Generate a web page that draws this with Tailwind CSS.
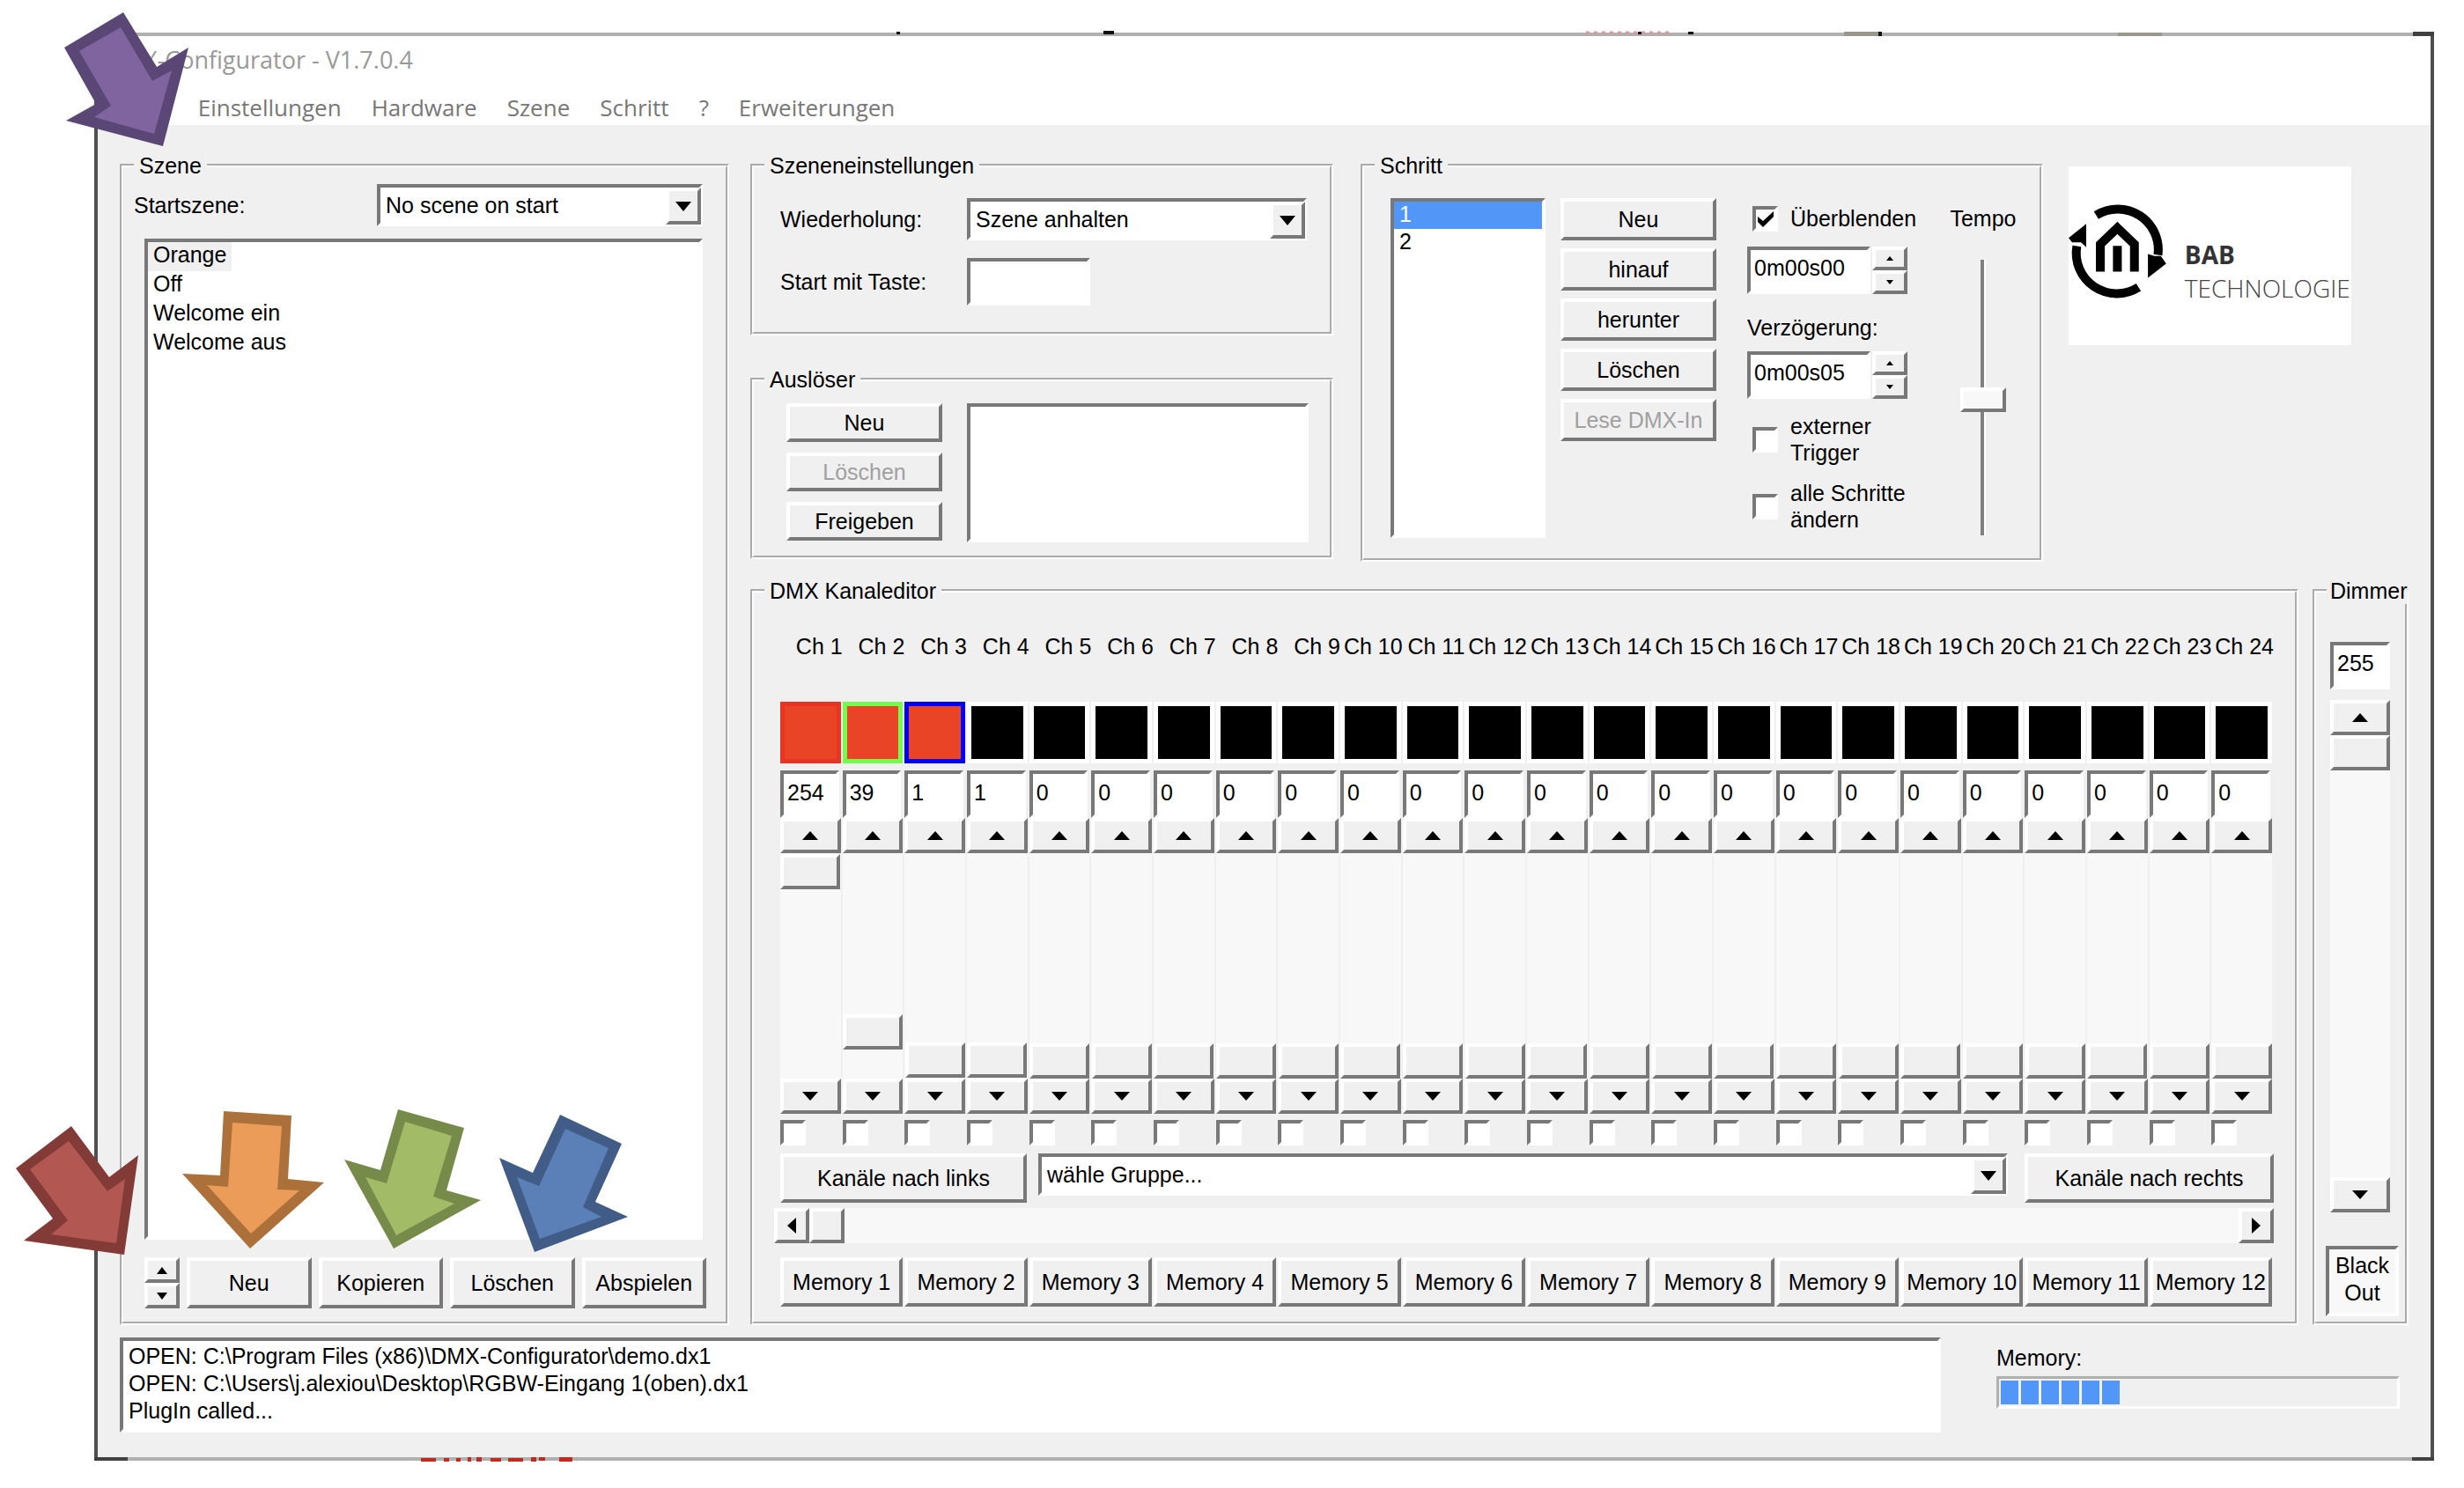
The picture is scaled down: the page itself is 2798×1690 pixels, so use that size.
<!DOCTYPE html>
<html lang="de">
  <head>
    <meta charset="UTF-8" />
    <meta name="viewport" content="width=device-width, initial-scale=1.0" />
    <title>DMX-Configurator - V1.7.0.4</title>
    <script src="https://cdn.jsdelivr.net/npm/@tailwindcss/browser@4"></script>
  </head>
  <body class="bg-white">
    <div
      class="relative flex min-h-screen flex-col bg-white pt-[37px] pr-[34px] pb-[31px] pl-[107px] font-['Liberation_Sans',sans-serif] text-[25px] leading-[30px] text-black"
    >
      <div
        class="flex flex-1 flex-col border-4 bg-[#f0f0f0] [border-color:#b0b0b0_#505050_#b0b0b0_#505050]"
      >
        <!-- Title bar + menu -->
        <header class="h-[101px] bg-white font-['Open_Sans',sans-serif] text-[26px]">
          <h1 class="pt-3 pl-2 text-[27px] text-[#999]">DMX-Configurator - V1.7.0.4</h1>
          <nav class="mt-6 flex gap-[34px] pl-4 text-[#777]">
            <a href="#">Datei</a>
            <a href="#">Einstellungen</a>
            <a href="#">Hardware</a>
            <a href="#">Szene</a>
            <a href="#">Schritt</a>
            <a href="#">?</a>
            <a href="#">Erweiterungen</a>
          </nav>
        </header>

        <div class="flex flex-1 flex-col px-[25px] pt-[31px] pb-7">
          <main class="flex flex-1">
            <!-- Szene -->
            <fieldset class="flex w-[692px] flex-col border-4 border-white [border-style:groove]">
              <legend class="ml-3 px-1.5">Szene</legend>
              <div class="flex flex-1 flex-col pt-1.5 pr-[22px] pb-[15px] pl-6">
                <div class="-ml-3 flex items-center justify-between">
                  <label for="startszene">Startszene:</label>
                  <div class="relative mr-1 w-[370px]">
                    <select
                      id="startszene"
                      class="h-[48px] w-full appearance-none border-4 bg-white pl-1.5 [border-color:#787878_#fff_#fff_#787878]"
                    >
                      <option>No scene on start</option>
                    </select>
                    <span
                      class="pointer-events-none absolute top-1 right-0.5 flex h-[42px] w-10 items-center justify-center border-4 bg-[#f0f0f0] [border-color:#fff_#787878_#787878_#fff]"
                      ><svg class="h-[11px] w-[18px]" viewBox="0 0 18 11"><path d="M0 0h18L9 11z" /></svg
                    ></span>
                  </div>
                </div>
                <select
                  size="4"
                  aria-label="Szenen"
                  class="mt-3.5 mr-1 flex-1 appearance-none overflow-hidden border-4 bg-white [border-color:#787878_#fff_#fff_#787878]"
                >
                  <option class="h-[33px] w-fit bg-[#f0f0f0] px-1.5 py-0 leading-[33px]">Orange</option>
                  <option class="h-[33px] w-fit px-1.5 py-0 leading-[33px]">Off</option>
                  <option class="h-[33px] w-fit px-1.5 py-0 leading-[33px]">Welcome ein</option>
                  <option class="h-[33px] w-fit px-1.5 py-0 leading-[33px]">Welcome aus</option>
                </select>
                <div class="mt-5 flex h-[58px] gap-2">
                  <div class="flex w-10 flex-col">
                    <button
                      aria-label="nach oben"
                      class="flex flex-1 items-center justify-center border-4 [border-color:#fff_#787878_#787878_#fff]"
                    >
                      <svg class="h-2 w-3" viewBox="0 0 12 8"><path d="M0 8h12L6 0z" /></svg>
                    </button>
                    <button
                      aria-label="nach unten"
                      class="flex flex-1 items-center justify-center border-4 [border-color:#fff_#787878_#787878_#fff]"
                    >
                      <svg class="h-2 w-3" viewBox="0 0 12 8"><path d="M0 0h12L6 8z" /></svg>
                    </button>
                  </div>
                  <button class="flex-1 border-4 [border-color:#fff_#787878_#787878_#fff]">Neu</button>
                  <button class="flex-1 border-4 [border-color:#fff_#787878_#787878_#fff]">Kopieren</button>
                  <button class="flex-1 border-4 [border-color:#fff_#787878_#787878_#fff]">Löschen</button>
                  <button class="flex-1 border-4 [border-color:#fff_#787878_#787878_#fff]">Abspielen</button>
                </div>
              </div>
            </fieldset>

            <div class="ml-6 flex flex-1 flex-col">
              <div class="flex items-start">
                <div class="flex w-[662px] flex-col gap-[35px]">
                  <!-- Szeneneinstellungen -->
                  <fieldset class="h-[208px] border-4 border-white [border-style:groove]">
                    <legend class="ml-3 px-1.5">Szeneneinstellungen</legend>
                    <div class="flex flex-col gap-5 pt-[22px] pl-[30px]">
                      <div class="flex items-center">
                        <label for="wiederholung" class="w-[212px]">Wiederholung:</label>
                        <div class="relative w-[386px]">
                          <select
                            id="wiederholung"
                            class="h-[48px] w-full appearance-none border-4 bg-white pl-1.5 [border-color:#787878_#fff_#fff_#787878]"
                          >
                            <option>Szene anhalten</option>
                          </select>
                          <span
                            class="pointer-events-none absolute top-1 right-0.5 flex h-[42px] w-10 items-center justify-center border-4 bg-[#f0f0f0] [border-color:#fff_#787878_#787878_#fff]"
                            ><svg class="h-[11px] w-[18px]" viewBox="0 0 18 11"><path d="M0 0h18L9 11z" /></svg
                          ></span>
                        </div>
                      </div>
                      <div class="flex items-center">
                        <label for="taste" class="w-[212px]">Start mit Taste:</label>
                        <input
                          id="taste"
                          type="text"
                          class="h-[54px] w-[140px] border-4 bg-white pl-1 [border-color:#787878_#fff_#fff_#787878]"
                        />
                      </div>
                    </div>
                  </fieldset>

                  <!-- Auslöser -->
                  <fieldset class="h-[219px] border-4 border-white [border-style:groove]">
                    <legend class="ml-3 px-1.5">Auslöser</legend>
                    <div class="flex gap-7 pt-3 pl-[37px]">
                      <div class="flex w-[177px] flex-col gap-3">
                        <button class="h-11 border-4 [border-color:#fff_#787878_#787878_#fff]">Neu</button>
                        <button
                          disabled
                          class="h-11 border-4 text-[#a0a0a0] [border-color:#fff_#787878_#787878_#fff]"
                        >
                          Löschen
                        </button>
                        <button class="h-11 border-4 [border-color:#fff_#787878_#787878_#fff]">
                          Freigeben
                        </button>
                      </div>
                      <select
                        size="4"
                        aria-label="Auslöser"
                        class="h-[158px] w-[388px] appearance-none border-4 bg-white [border-color:#787878_#fff_#fff_#787878]"
                      ></select>
                    </div>
                  </fieldset>
                </div>

                <!-- Schritt -->
                <fieldset class="ml-[31px] h-[465px] w-[775px] border-4 border-white [border-style:groove]">
                  <legend class="ml-3 px-1.5">Schritt</legend>
                  <div class="flex pt-[22px] pl-[30px]">
                    <select
                      size="4"
                      aria-label="Schritte"
                      class="h-[386px] w-[176px] appearance-none overflow-hidden border-4 bg-white [border-color:#787878_#fff_#fff_#787878]"
                    >
                      <option class="h-[31px] bg-[#5297f8] px-1.5 py-0 leading-[31px] text-white">1</option>
                      <option class="h-[31px] px-1.5 py-0 leading-[31px]">2</option>
                    </select>
                    <div class="ml-[17px] flex w-[177px] flex-col gap-[9px]">
                      <button class="h-12 border-4 [border-color:#fff_#787878_#787878_#fff]">Neu</button>
                      <button class="h-12 border-4 [border-color:#fff_#787878_#787878_#fff]">hinauf</button>
                      <button class="h-12 border-4 [border-color:#fff_#787878_#787878_#fff]">herunter</button>
                      <button class="h-12 border-4 [border-color:#fff_#787878_#787878_#fff]">Löschen</button>
                      <button
                        disabled
                        class="h-12 border-4 text-[#a0a0a0] [border-color:#fff_#787878_#787878_#fff]"
                      >
                        Lese DMX-In
                      </button>
                    </div>
                    <div class="ml-[35px] w-[194px] pt-2">
                      <label class="flex items-center gap-3.5 pl-1.5">
                        <span class="relative flex">
                          <input
                            type="checkbox"
                            checked
                            class="size-[29px] appearance-none border-4 bg-white [border-color:#787878_#fff_#fff_#787878]"
                          />
                          <svg class="absolute top-1.5 left-1.5 size-[18px]" viewBox="0 0 18 18">
                            <path d="M0 6v6l6 6L18 6V0L6 11z" />
                          </svg>
                        </span>
                        Überblenden
                      </label>
                      <div class="mt-[17px] flex h-[54px] gap-0.5">
                        <input
                          type="text"
                          value="0m00s00"
                          aria-label="Überblendzeit"
                          class="w-[140px] border-4 bg-white pb-1.5 pl-1 [border-color:#787878_#fff_#fff_#787878]"
                        />
                        <div class="flex w-10 flex-col">
                          <button
                            aria-label="mehr"
                            class="flex flex-1 items-center justify-center border-4 [border-color:#fff_#787878_#787878_#fff]"
                          >
                            <svg class="h-[5px] w-2" viewBox="0 0 8 5"><path d="M0 5h8L4 0z" /></svg>
                          </button>
                          <button
                            aria-label="weniger"
                            class="flex flex-1 items-center justify-center border-4 [border-color:#fff_#787878_#787878_#fff]"
                          >
                            <svg class="h-[5px] w-2" viewBox="0 0 8 5"><path d="M0 0h8L4 5z" /></svg>
                          </button>
                        </div>
                      </div>
                      <label for="verzoegerung" class="mt-[23px] block">Verzögerung:</label>
                      <div class="mt-3 flex h-[54px] gap-0.5">
                        <input
                          id="verzoegerung"
                          type="text"
                          value="0m00s05"
                          class="w-[140px] border-4 bg-white pb-1.5 pl-1 [border-color:#787878_#fff_#fff_#787878]"
                        />
                        <div class="flex w-10 flex-col">
                          <button
                            aria-label="mehr"
                            class="flex flex-1 items-center justify-center border-4 [border-color:#fff_#787878_#787878_#fff]"
                          >
                            <svg class="h-[5px] w-2" viewBox="0 0 8 5"><path d="M0 5h8L4 0z" /></svg>
                          </button>
                          <button
                            aria-label="weniger"
                            class="flex flex-1 items-center justify-center border-4 [border-color:#fff_#787878_#787878_#fff]"
                          >
                            <svg class="h-[5px] w-2" viewBox="0 0 8 5"><path d="M0 0h8L4 5z" /></svg>
                          </button>
                        </div>
                      </div>
                      <label class="mt-4 flex items-center gap-3.5 pl-1.5">
                        <input
                          type="checkbox"
                          class="size-[29px] appearance-none border-4 bg-white [border-color:#787878_#fff_#fff_#787878]"
                        />
                        <span>externer<br />Trigger</span>
                      </label>
                      <label class="mt-4 flex items-center gap-3.5 pl-1.5">
                        <input
                          type="checkbox"
                          class="size-[29px] appearance-none border-4 bg-white [border-color:#787878_#fff_#fff_#787878]"
                        />
                        <span>alle Schritte<br />ändern</span>
                      </label>
                    </div>
                    <div class="ml-[35px] flex w-[78px] flex-col items-center pt-2">
                      <label for="tempo">Tempo</label>
                      <input
                        id="tempo"
                        type="range"
                        value="49"
                        class="mt-8 h-[313px] w-[52px] appearance-none bg-[linear-gradient(90deg,#808080_4px,#fff_4px)] bg-[length:6px_100%] bg-center bg-no-repeat [direction:rtl] [writing-mode:vertical-lr] [&::-webkit-slider-thumb]:h-[28px] [&::-webkit-slider-thumb]:w-[52px] [&::-webkit-slider-thumb]:appearance-none [&::-webkit-slider-thumb]:border-4 [&::-webkit-slider-thumb]:bg-[#f8f8f8] [&::-webkit-slider-thumb]:[border-color:#fff_#787878_#787878_#fff]"
                      />
                    </div>
                  </div>
                </fieldset>

                <!-- Logo -->
                <svg
                  class="mt-4 ml-[29px] h-[203px] w-[321px] bg-white"
                  viewBox="148 87 962 608"
                  role="img"
                  aria-label="BAB Technologie"
                >
                  <g fill="none" stroke="#000" stroke-width="30">
                    <path d="M242 253A138 138 0 0 1 452 388" />
                    <path d="M176 358A138 138 0 0 0 386 498" />
                    <path d="M256 445V352L314 296L372 352V445M314 357V445" />
                  </g>
                  <path d="M148 330L208 282V362L190 345H160zM480 418L418 466V385L440 392H462z" />
                  <text x="543" y="420" class="fill-[#333] font-['Open_Sans'] text-[84px] font-bold">BAB</text>
                  <text x="543" y="532" class="fill-[#444] font-['Open_Sans'] text-[84px] font-light">
                    TECHNOLOGIE
                  </text>
                </svg>
              </div>

              <div class="mt-[18px] flex flex-1 gap-4">
                <!-- DMX Kanaleditor -->
                <fieldset class="flex min-w-0 flex-1 flex-col border-4 border-white [border-style:groove]">
                  <legend class="ml-3 px-1.5">DMX Kanaleditor</legend>
                  <div class="flex flex-1 flex-col pt-[33px] pr-6 pb-[17px] pl-[23px]">
                    <div id="channels" class="grid flex-1 grid-cols-24 pl-[7px]"></div>
                    <div class="mt-[9px] flex items-start pl-[7px]">
                      <button class="h-14 w-[280px] border-4 [border-color:#fff_#787878_#787878_#fff]">
                        Kanäle nach links
                      </button>
                      <div class="relative ml-[13px] flex-1">
                        <select
                          aria-label="Gruppe"
                          class="h-[48px] w-full appearance-none border-4 bg-white pl-1.5 [border-color:#787878_#fff_#fff_#787878]"
                        >
                          <option>wähle Gruppe...</option>
                        </select>
                        <span
                          class="pointer-events-none absolute top-1 right-0.5 flex h-[42px] w-10 items-center justify-center border-4 bg-[#f0f0f0] [border-color:#fff_#787878_#787878_#fff]"
                          ><svg class="h-[11px] w-[18px]" viewBox="0 0 18 11"><path d="M0 0h18L9 11z" /></svg
                        ></span>
                      </div>
                      <button
                        class="ml-[19px] h-14 w-[283px] border-4 [border-color:#fff_#787878_#787878_#fff]"
                      >
                        Kanäle nach rechts
                      </button>
                    </div>
                    <div class="mt-1.5 flex h-10">
                      <button
                        aria-label="zurück"
                        class="flex w-10 items-center justify-center border-4 [border-color:#fff_#787878_#787878_#fff]"
                      >
                        <svg class="h-[18px] w-2.5" viewBox="0 0 10 18"><path d="M10 0v18L0 9z" /></svg>
                      </button>
                      <input
                        type="range"
                        value="0"
                        aria-label="Kanalbereich"
                        class="h-10 min-w-0 flex-1 appearance-none bg-[#f8f8f8] [&::-webkit-slider-thumb]:size-10 [&::-webkit-slider-thumb]:appearance-none [&::-webkit-slider-thumb]:border-4 [&::-webkit-slider-thumb]:bg-[#f0f0f0] [&::-webkit-slider-thumb]:[border-color:#fff_#787878_#787878_#fff]"
                      />
                      <button
                        aria-label="weiter"
                        class="flex w-10 items-center justify-center border-4 [border-color:#fff_#787878_#787878_#fff]"
                      >
                        <svg class="h-[18px] w-2.5" viewBox="0 0 10 18"><path d="M0 0v18L10 9z" /></svg>
                      </button>
                    </div>
                    <div id="memories" class="mt-4 grid grid-cols-12 pl-[7px]"></div>
                  </div>
                </fieldset>

                <!-- Dimmer -->
                <fieldset class="flex w-[109px] min-w-0 flex-col border-4 border-white [border-style:groove]">
                  <legend class="ml-3 pl-1">Dimmer</legend>
                  <div class="flex flex-1 flex-col pt-[43px] pr-[7px] pb-1.5 pl-[11px]">
                    <div class="flex flex-1 flex-col pr-2.5 pl-[5px]">
                      <input
                        type="text"
                        value="255"
                        aria-label="Dimmer"
                        class="h-[54px] w-full border-4 bg-white pb-1.5 pl-1 [border-color:#787878_#fff_#fff_#787878]"
                      />
                      <button
                        aria-label="heller"
                        class="mt-3 flex h-10 items-center justify-center border-4 [border-color:#fff_#787878_#787878_#fff]"
                      >
                        <svg class="h-2.5 w-[18px]" viewBox="0 0 18 10"><path d="M0 10h18L9 0z" /></svg>
                      </button>
                      <input
                        type="range"
                        max="255"
                        value="255"
                        aria-label="Dimmer Regler"
                        class="min-h-0 w-full flex-1 appearance-none bg-[#f8f8f8] [direction:rtl] [writing-mode:vertical-lr] [&::-webkit-slider-thumb]:h-10 [&::-webkit-slider-thumb]:w-[68px] [&::-webkit-slider-thumb]:appearance-none [&::-webkit-slider-thumb]:border-4 [&::-webkit-slider-thumb]:bg-[#f0f0f0] [&::-webkit-slider-thumb]:[border-color:#fff_#787878_#787878_#fff]"
                      />
                      <button
                        aria-label="dunkler"
                        class="flex h-10 items-center justify-center border-4 [border-color:#fff_#787878_#787878_#fff]"
                      >
                        <svg class="h-2.5 w-[18px]" viewBox="0 0 18 10"><path d="M0 0h18L9 10z" /></svg>
                      </button>
                    </div>
                    <button
                      aria-pressed="true"
                      class="mt-[38px] h-20 border-4 bg-[#f8f8f8] pb-1 leading-[31px] [border-color:#787878_#fff_#fff_#787878]"
                    >
                      Black<br />Out
                    </button>
                  </div>
                </fieldset>
              </div>
            </div>
          </main>

          <!-- Log + memory usage -->
          <footer class="mt-3.5 flex items-start">
            <textarea
              readonly
              aria-label="Protokoll"
              class="block h-[108px] flex-1 resize-none overflow-hidden border-4 bg-white px-1.5 py-0.5 leading-[31px] [border-color:#787878_#fff_#fff_#787878]"
            >
OPEN: C:\Program Files (x86)\DMX-Configurator\demo.dx1
OPEN: C:\Users\j.alexiou\Desktop\RGBW-Eingang 1(oben).dx1
PlugIn called...</textarea
            >
            <div class="mt-2 mr-2.5 ml-[63px] w-[458px]">
              <span id="memory-label">Memory:</span>
              <div
                role="progressbar"
                aria-labelledby="memory-label"
                aria-valuenow="30"
                class="mt-1.5 flex h-[37px] gap-[3px] border-3 p-0.5 [border-color:#b0b0b0_#fff_#fff_#b0b0b0]"
              >
                <span class="w-5 bg-[#5297f8]"></span>
                <span class="w-5 bg-[#5297f8]"></span>
                <span class="w-5 bg-[#5297f8]"></span>
                <span class="w-5 bg-[#5297f8]"></span>
                <span class="w-5 bg-[#5297f8]"></span>
                <span class="w-5 bg-[#5297f8]"></span>
              </div>
            </div>
          </footer>
        </div>
      </div>

      <!-- Arrows and edge marks over the window -->
      <svg class="pointer-events-none absolute top-0 left-0 h-[1690px] w-[2798px]" viewBox="0 0 2798 1690">
        <path fill="#5a4776" d="M140 14L178 76L214 54L185 166L75 137L109 118L73 54z" />
        <path fill="#7f649f" d="M137 31L173 92L195 80L175 152L107 133L126 120L90 58z" />
        <path fill="#833b38" d="M81 1279L124 1337L157 1312L141 1425L27 1409L60 1384L18 1327z" />
        <path fill="#b25751" d="M78 1296L122 1353L142 1339L132 1412L58 1402L77 1386L34 1328z" />
        <path fill="#ac713b" d="M254 1262L331 1267L327 1339L368 1343L284 1418L207 1333L250 1335z" />
        <path fill="#ea9c58" d="M264 1275L320 1279L315 1351L340 1352L285 1401L235 1346L259 1348z" />
        <path fill="#768a49" d="M452 1260L527 1281L507 1352L546 1363L447 1418L391 1317L432 1329z" />
        <path fill="#a2bb67" d="M460 1274L513 1290L492 1359L516 1367L450 1403L415 1337L439 1344z" />
        <path fill="#415c87" d="M636 1266L706 1299L676 1365L713 1382L607 1422L567 1315L605 1332z" />
        <path fill="#5a80b7" d="M642 1282L691 1304L662 1371L683 1382L613 1407L587 1337L612 1347z" />
        <path fill="#404040" d="M107 1655h38v4h-38zM2739 1655h25v4h-25zM2740 36h24v5h-24z" />
        <path fill="#111" d="M1018 36h4v3h-4zM1253 35h12v4h-12zM1860 36h4v3h-4zM1917 36h6v3h-6zM2133 36h4v5h-4z" />
        <path fill="#99968c" d="M2094 36h39v5h-39zM2405 37h50v4h-50z" />
        <path stroke="#d99" stroke-width="3" stroke-dasharray="4 5" d="M1801 37H1900" />
        <path
          fill="#c22a1e"
          d="M478 1656h17v4h-17zM504 1656h6v4h-6zM518 1656h5v4h-5zM531 1655h4v5h-4zM541 1655h6v5h-6zM557 1656h12v4h-12zM577 1656h17v4h-17zM603 1655h6v5h-6zM612 1655h7v4h-7zM635 1655h15v5h-15z"
        />
      </svg>
    </div>

    <script>
      const values = [254, 39, 1, 1].concat(Array(20).fill(0));
      // first three channels are the R, G and B parts of one fixture
      const swatches = [
        "bg-[#e94426] border-[#ea3323]",
        "bg-[#e94426] border-[#75fb4c]",
        "bg-[#e94426] border-[#0000f5]",
      ];

      document.getElementById("channels").innerHTML = values
        .map((value, i) => {
          const ch = i + 1;
          return `
          <div class="flex min-w-0 flex-col">
            <label for="ch${ch}" class="flex justify-end whitespace-nowrap">Ch ${ch}</label>
            <div class="mt-12 mr-0.5 h-[70px] border-5 ${swatches[i] || "bg-black border-white"}"></div>
            <input id="ch${ch}" type="text" value="${value}"
              class="mt-2 mr-1 h-[54px] min-w-0 border-4 bg-white pb-1 pl-1 [border-color:#787878_#fff_#fff_#787878]" />
            <button aria-label="Ch ${ch} mehr"
              class="mr-0.5 flex h-10 items-center justify-center border-4 [border-color:#fff_#787878_#787878_#fff]">
              <svg class="h-2.5 w-[18px]" viewBox="0 0 18 10"><path d="M0 10h18L9 0z" /></svg>
            </button>
            <input type="range" max="255" value="${value}" aria-label="Ch ${ch} Regler"
              class="mr-0.5 min-h-0 flex-1 appearance-none bg-[#f8f8f8] [direction:rtl] [writing-mode:vertical-lr] [&::-webkit-slider-thumb]:h-10 [&::-webkit-slider-thumb]:w-[68px] [&::-webkit-slider-thumb]:appearance-none [&::-webkit-slider-thumb]:border-4 [&::-webkit-slider-thumb]:bg-[#f0f0f0] [&::-webkit-slider-thumb]:[border-color:#fff_#787878_#787878_#fff]" />
            <button aria-label="Ch ${ch} weniger"
              class="mr-0.5 flex h-10 items-center justify-center border-4 [border-color:#fff_#787878_#787878_#fff]">
              <svg class="h-2.5 w-[18px]" viewBox="0 0 18 10"><path d="M0 0h18L9 10z" /></svg>
            </button>
            <input type="checkbox" aria-label="Ch ${ch} wählen"
              class="mt-[7px] size-[29px] appearance-none border-4 bg-white [border-color:#787878_#fff_#fff_#787878]" />
          </div>`;
        })
        .join("");

      document.getElementById("memories").innerHTML = values
        .slice(0, 12)
        .map(
          (_, i) =>
            `<button class="mr-0.5 h-14 border-4 whitespace-nowrap [border-color:#fff_#787878_#787878_#fff]">Memory ${i + 1}</button>`
        )
        .join("");
    </script>
  </body>
</html>
